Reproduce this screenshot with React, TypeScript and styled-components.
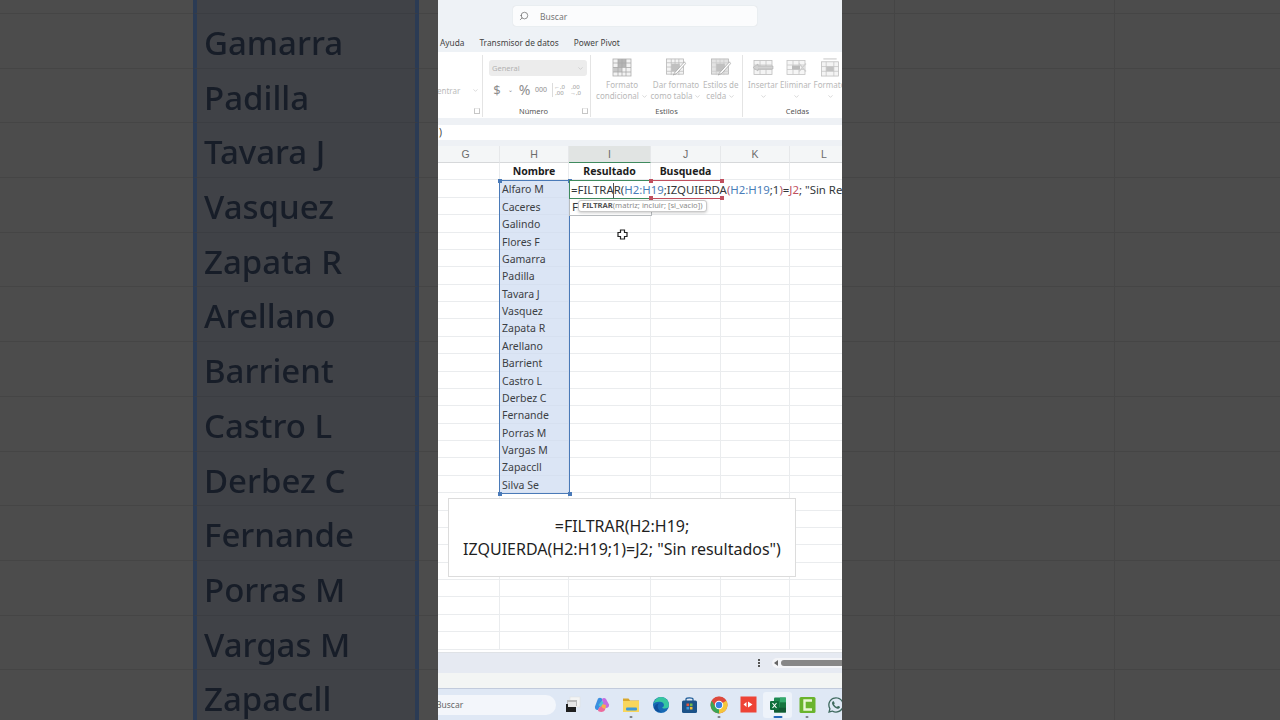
import React from 'react';
import styled, { createGlobalStyle } from 'styled-components';
import { Search, ChevronDown } from 'lucide-react';
import { FaWhatsapp } from 'react-icons/fa';

const FONT = `"Noto Sans", "Liberation Sans", sans-serif`;
const NAMES = [
	'Alfaro M', 'Caceres', 'Galindo', 'Flores F', 'Gamarra', 'Padilla', 'Tavara J', 'Vasquez', 'Zapata R',
	'Arellano', 'Barrient', 'Castro L', 'Derbez C', 'Fernande', 'Porras M', 'Vargas M', 'Zapaccll', 'Silva Se',
];
const COLUMNS = ['G', 'H', 'I', 'J', 'K', 'L'];
const HEADERS: Record<string, string> = { H: 'Nombre', I: 'Resultado', J: 'Busqueda' };
const SHEET_ROWS = 28;

const Global = createGlobalStyle`
	html, body {
		margin: 0;
		width: 1280px;
		height: 720px;
		overflow: hidden;
		background: #4c4c4c;
		font-family: ${FONT};
	}
	* { box-sizing: border-box; }
`;

const Page = styled.div`
	display: flex;
	width: 1280px;
	height: 720px;
	overflow: hidden;
`;

/* dimmed, enlarged copy of the sheet on both sides of the video */
const Backdrop = styled.div`
	flex: 0 0 438px;
	height: 720px;
	overflow: hidden;
	background: #4c4c4c;
	filter: blur(0.7px);
`;

const BackdropGrid = styled.div<{ $columns: string }>`
	display: grid;
	grid-template-columns: ${p => p.$columns};
	grid-auto-rows: 54.7px;
	margin-top: -40.7px;
`;

const BackdropCell = styled.div`
	border-bottom: 1.5px solid #454545;
`;

const BackdropLined = styled(BackdropCell)`
	border-right: 1.5px solid #454545;
`;

const BackdropName = styled(BackdropCell)`
	background: #404247;
	border-left: 4px solid #2b3b54;
	border-right: 4px solid #2b3b54;
	border-bottom-color: #3b3d42;
	padding-left: 7px;
	color: #171d28;
	font-size: 33px;
	font-weight: 500;
	line-height: 57px;
	white-space: nowrap;
`;

const Video = styled.div`
	flex: 0 0 404px;
	height: 720px;
	display: flex;
	flex-direction: column;
	overflow: hidden;
	background: #eef2f6;
`;

const TitleBar = styled.div`
	height: 33px;
	flex: none;
	padding: 6px 0 0 75px;
`;

const SearchBox = styled.div`
	width: 244px;
	height: 20px;
	background: #fbfcfd;
	border-radius: 3px;
	box-shadow: 0 0 1px #c4c8cc;
	display: flex;
	align-items: center;
	gap: 11px;
	padding-left: 6px;
	font-size: 8.5px;
	color: #777;
	svg { transform: scaleX(-1); color: #555; }
`;

const Tabs = styled.div`
	height: 19px;
	flex: none;
	display: flex;
	align-items: center;
	gap: 15px;
	padding: 0 0 1px 2px;
	font-size: 8.3px;
	color: #444;
`;

const Ribbon = styled.div`
	height: 66px;
	flex: none;
	background: #fff;
	display: flex;
	box-shadow: 0 1px 1px #cfd2d5;
`;

const RibbonGroup = styled.div<{ $width: number; $last?: boolean }>`
	flex: 0 0 ${p => p.$width}px;
	min-width: 0;
	margin: 3px 0 1px;
	border-right: ${p => (p.$last ? 'none' : '1px solid #e4e4e4')};
	display: flex;
	flex-direction: column;
`;

const GroupBody = styled.div`
	flex: 1;
	display: flex;
	min-height: 0;
`;

const GroupFooter = styled.div<{ $inset?: number }>`
	height: 12px;
	display: grid;
	grid-template-columns: 1fr auto 1fr;
	align-items: center;
	font-size: 7.5px;
	color: #555;
	padding-right: ${p => p.$inset ?? 0}px;
`;

const GroupTitle = styled.span`
	grid-column: 2;
`;

const Launcher = styled.span<{ $pull?: number }>`
	grid-column: 3;
	justify-self: end;
	width: 6px;
	height: 6px;
	margin-right: ${p => 2 - (p.$pull ?? 0)}px;
	border: 1px solid #c6c6c6;
	border-top-color: #e8e8e8;
`;

const CenterSlot = styled.div`
	display: flex;
	align-items: center;
	gap: 12px;
	padding-top: 26px;
	margin-left: -1px;
	height: 44px;
	font-size: 8px;
	color: #bbb;
`;

const NumberBody = styled.div`
	display: flex;
	flex-direction: column;
	padding: 5px 4px 0 6px;
	width: 100%;
`;

const FormatSelect = styled.div`
	height: 16px;
	width: 98px;
	background: #ececec;
	border-radius: 3px;
	font-size: 7.5px;
	color: #b2b2b2;
	display: flex;
	align-items: center;
	justify-content: space-between;
	padding: 0 3px;
`;

const NumberSymbols = styled.div`
	display: flex;
	align-items: center;
	height: 25px;
	margin-top: 1px;
	padding-left: 2px;
	color: #8e8e8e;
`;

const NumberSymbol = styled.span<{ $size: number; $width: number }>`
	font-size: ${p => p.$size}px;
	width: ${p => p.$width}px;
	text-align: center;
	flex: none;
`;

const SymbolDivider = styled.span`
	width: 1px;
	height: 14px;
	background: #dcdcdc;
	margin-left: 1px;
`;

const StackedDigits = styled.span<{ $width: number }>`
	width: ${p => p.$width}px;
	flex: none;
	font-size: 6px;
	line-height: 6px;
	text-align: center;
	color: #9a9a9a;
`;

const RibbonButton = styled.div<{ $width: number }>`
	flex: 0 0 ${p => p.$width}px;
	display: flex;
	flex-direction: column;
	align-items: center;
	padding-top: 3px;
	svg { flex: none; }
`;

const ButtonLabel = styled.div`
	margin-top: 2px;
	font-size: 8px;
	line-height: 11px;
	color: #b8b8b8;
	text-align: center;
	white-space: nowrap;
	svg { display: inline; margin-left: 2px; vertical-align: middle; }
`;

const ButtonRow = styled(GroupBody)`
	padding-left: 4px;
`;

const Strip = styled.div<{ $height: number }>`
	height: ${p => p.$height}px;
	flex: none;
	background: #eef1f5;
`;

const FormulaBar = styled.div`
	height: 15px;
	flex: none;
	background: #fff;
	padding-left: 1px;
	font-size: 10px;
	line-height: 14px;
	color: #444;
`;

const Sheet = styled.div`
	position: relative;
	height: 506px;
	flex: none;
	background: #fff;
	overflow: hidden;
	display: grid;
	grid-template-columns: 62px 69px 82px 70px 69px 69px;
	grid-template-rows: 17px repeat(${SHEET_ROWS}, 17.39px);
`;

const ColumnHead = styled.div<{ $active?: boolean; $shift?: boolean }>`
	background: ${p => (p.$active ? '#e1e4e3' : '#f4f6f7')};
	border-bottom: ${p => (p.$active ? '1.5px solid #3f8a5e' : '1px solid #d6d8da')};
	border-right: 1px solid #e6e8ea;
	font-family: "Liberation Sans", sans-serif;
	font-size: 10.5px;
	line-height: 16px;
	text-align: center;
	color: #6c6c6c;
	padding-right: ${p => (p.$shift ? '6px' : '0')};
`;

const Cell = styled.div<{ $selected?: boolean; $header?: boolean }>`
	background: ${p => (p.$selected ? '#dbe5f5' : '#fff')};
	border-right: 1px solid ${p => (p.$selected ? '#d6e0f0' : '#eaecee')};
	border-bottom: 1px solid ${p => (p.$selected ? '#d6e0f0' : '#eaecee')};
	font-size: 10.5px;
	line-height: 16px;
	font-weight: ${p => (p.$header ? 700 : 400)};
	text-align: ${p => (p.$header ? 'center' : 'left')};
	padding: ${p => (p.$header ? '0' : '1px 0 0 2px')};
	color: ${p => (p.$header ? '#1d1d1d' : '#3c3f44')};
	white-space: nowrap;
	overflow: hidden;
`;

const RangeBox = styled.div`
	position: absolute;
	left: 61px;
	top: 34px;
	width: 71px;
	height: 314px;
	border: 1.5px solid #4a7ab8;
`;

const Handle = styled.span<{ $color: string; $x: 'left' | 'right'; $y: 'top' | 'bottom' }>`
	position: absolute;
	width: 4px;
	height: 4px;
	background: ${p => p.$color};
	${p => p.$x}: -2.5px;
	${p => p.$y}: -2.5px;
`;

const FormulaEditor = styled.div`
	position: absolute;
	left: 131px;
	top: 35px;
	width: 273px;
	height: 17px;
	background: #fff;
	padding-left: 2px;
	font-size: 11.4px;
	line-height: 17px;
	color: #33373a;
	white-space: pre;
	overflow: hidden;
`;

const Ref = styled.span<{ $color: string }>`
	color: ${p => p.$color};
`;

const ActiveCell = styled.div`
	position: absolute;
	left: 131px;
	top: 34px;
	width: 83px;
	height: 18.5px;
	border: 1.5px solid #3f8a5e;
	border-right: none;
`;

const SearchRange = styled.div`
	position: absolute;
	left: 213px;
	top: 34px;
	width: 70px;
	height: 18.5px;
	border-top: 1.5px solid #c0505f;
	border-bottom: 1.5px solid #c0505f;
`;

const TextCaret = styled.div`
	position: absolute;
	left: 175px;
	top: 37px;
	width: 1px;
	height: 15px;
	background: #555;
`;

const SpillCell = styled.div`
	position: absolute;
	left: 131px;
	top: 52px;
	width: 83px;
	height: 17.5px;
	background: #fff;
	border: 1px solid #b8bcbf;
	border-top: none;
	padding-left: 2px;
	font-size: 11.5px;
	line-height: 17px;
	color: #33373a;
`;

const ArgTip = styled.div`
	position: absolute;
	left: 140px;
	top: 54px;
	width: 129px;
	height: 11.5px;
	background: #fff;
	border: 1px solid #c9c9c9;
	border-radius: 3px;
	box-shadow: 0 1px 3px rgba(0, 0, 0, 0.2);
	padding-left: 3px;
	font-size: 7.6px;
	line-height: 9.5px;
	color: #8a8a8a;
	white-space: nowrap;
	b { color: #555; }
`;

const CellCursor = styled.svg`
	position: absolute;
	left: 179px;
	top: 83px;
`;

const Caption = styled.div`
	position: absolute;
	left: 10px;
	top: 352px;
	width: 348px;
	height: 79px;
	background: #fff;
	border: 1px solid #dcdcdc;
	display: flex;
	align-items: center;
	justify-content: center;
	text-align: center;
	font-size: 16px;
	line-height: 23px;
	color: #1f1f1f;
`;

const SheetTabs = styled.div`
	height: 21px;
	flex: none;
	background: #e6eaf2;
	display: flex;
	align-items: center;
	justify-content: flex-end;
	border-top: 1px solid #dfe2e6;
`;

const Dots = styled.span`
	width: 2px;
	height: 2px;
	background: #555;
	box-shadow: 0 3px 0 #555, 0 -3px 0 #555;
	margin-right: 12px;
`;

const ScrollTrack = styled.div`
	width: 70px;
	height: 10px;
	background: #f4f5f8;
	border-radius: 5px 0 0 5px;
	display: flex;
	align-items: center;
	padding-left: 2px;
	gap: 3px;
`;

const ScrollArrow = styled.span`
	width: 0;
	height: 0;
	border-top: 3px solid transparent;
	border-bottom: 3px solid transparent;
	border-right: 4px solid #666;
`;

const ScrollThumb = styled.span`
	flex: 1;
	height: 6px;
	background: #878787;
	border-radius: 3px 0 0 3px;
`;

const StatusBar = styled.div`
	height: 15px;
	flex: none;
	background: #f3f5f4;
`;

const Taskbar = styled.div`
	flex: 1;
	background: #dfe8f5;
	border-top: 1px solid #c2cbdc;
	display: flex;
	align-items: center;
`;

const TaskSearch = styled.div`
	flex: 0 0 118px;
	height: 20px;
	background: #f3f6fb;
	border-radius: 0 10px 10px 0;
	font-size: 8.5px;
	line-height: 20px;
	color: #666;
	margin-right: 2px;
	text-indent: -2px;
`;

const TaskIcon = styled.div<{ $active?: boolean; $mark?: 'open' | 'focus' }>`
	position: relative;
	flex: 0 0 29.3px;
	height: 26px;
	display: flex;
	align-items: center;
	justify-content: center;
	border-radius: 3px;
	background: ${p => (p.$active ? '#eef3fa' : 'transparent')};
	&::after {
		content: '';
		display: ${p => (p.$mark ? 'block' : 'none')};
		position: absolute;
		bottom: 0;
		left: 50%;
		transform: translateX(-50%);
		width: ${p => (p.$mark === 'focus' ? '9px' : '3px')};
		height: 1.5px;
		border-radius: 1px;
		background: ${p => (p.$mark === 'focus' ? '#2568b8' : '#7c8288')};
	}
`;

const GridLines = ({ stroke }: { stroke: string }) => (
	<path d="M1 5H19M1 9.5H19M1 14H19M6 1V18M10 1V18M14 1V18" stroke={stroke} strokeWidth="0.8" fill="none" />
);

const ConditionalGlyph = () => (
	<svg width="20" height="19" viewBox="0 0 20 19">
		<rect x="1" y="1" width="18" height="17" fill="#f2f2f2" stroke="#aeaeae" strokeWidth="0.8" />
		<rect x="6" y="1" width="8" height="8" fill="#b5b5b5" />
		<rect x="1" y="9" width="9" height="5" fill="#c8c8c8" />
		<GridLines stroke="#a9a9a9" />
	</svg>
);

const BrushGlyph = ({ boxed }: { boxed?: boolean }) => (
	<svg width="22" height="19" viewBox="0 0 22 20">
		<rect x="1" y="1" width="18" height="16" fill={boxed ? '#e3e3e3' : '#f4f4f4'} stroke="#b4b4b4" strokeWidth="0.8" />
		<GridLines stroke={boxed ? '#cccccc' : '#bcbcbc'} />
		<rect x="6" y="6" width="9" height="8" fill="#c0c0c0" />
		<path d="M20 4L10 15L8 18L12 16L21 6Z" fill="#fff" stroke="#a4a4a4" strokeWidth="0.8" />
	</svg>
);

const InsertGlyph = () => (
	<svg width="22" height="19" viewBox="0 0 22 18">
		<rect x="2" y="2" width="18" height="14" fill="#f4f4f4" stroke="#bdbdbd" strokeWidth="0.8" />
		<path d="M2 6.5H20M2 11H20M8 2V16M14 2V16" stroke="#c4c4c4" strokeWidth="0.8" />
		<path d="M1 9L6 5.5V7.5H21V10.5H6V12.5Z" fill="#d2d2d2" stroke="#b0b0b0" strokeWidth="0.6" />
	</svg>
);

const DeleteGlyph = () => (
	<svg width="22" height="19" viewBox="0 0 22 18">
		<rect x="2" y="2" width="18" height="14" fill="#f6f6f6" stroke="#c4c4c4" strokeWidth="0.8" />
		<path d="M2 6.5H20M2 11H20M8 2V16M14 2V16" stroke="#c8c8c8" strokeWidth="0.8" />
		<rect x="7" y="7" width="8" height="4" fill="#bbbbbb" />
		<path d="M14 5L21 13M21 5L14 13" stroke="#cfcfcf" strokeWidth="1.2" />
	</svg>
);

const SizeGlyph = () => (
	<svg width="20" height="19" viewBox="0 0 20 20">
		<path d="M3 1H17" stroke="#b4b4b4" strokeWidth="0.8" />
		<rect x="1" y="4" width="18" height="15" fill="#f4f4f4" stroke="#bdbdbd" strokeWidth="0.8" />
		<path d="M1 9H19M1 14H19M6 4V19M14 4V19" stroke="#c4c4c4" strokeWidth="0.8" />
		<rect x="6" y="9" width="8" height="5" fill="#c2c2c2" />
	</svg>
);

const Chevron = () => <ChevronDown size={7} color="#bdbdbd" strokeWidth={2} />;

const WindowsSwitcherIcon = () => (
	<svg width="17" height="17" viewBox="0 0 17 17">
		<rect x="6" y="1" width="10" height="10" fill="#f3f4f4" stroke="#dedede" strokeWidth="0.5" />
		<rect x="3" y="4" width="10" height="6" fill="#b9b9b9" />
		<rect x="2" y="8" width="10" height="8" fill="#1f1f1f" />
		<rect x="4" y="6" width="8" height="5" fill="#e6e6e6" />
	</svg>
);

const CopilotIcon = () => (
	<svg width="18" height="18" viewBox="0 0 18 18">
		<path d="M5 2.5C7 1 9 2 9.5 4L8 9L5 14C3 14.5 1.5 12.5 2 10.5Z" fill="#3b8fe0" />
		<path d="M6 15.5C4.5 15 5 13.5 6 12L9 8L13 9L12 14C11 16 8 16.5 6 15.5Z" fill="#ec6a9c" />
		<path d="M9 3C10 1.5 12 1.5 13 3L16 8.5C16.5 10.5 15 12 13 12L10 10Z" fill="#c36ee0" />
		<path d="M9 8L13 9L12.5 12.5C11 13 9 12 8.5 10.5Z" fill="#f4b24a" />
		<path d="M5.5 9L9 4.5L10.5 7L7.5 11Z" fill="#4cc6d0" />
	</svg>
);

const FolderIcon = () => (
	<svg width="18" height="18" viewBox="0 0 18 18">
		<path d="M1 2.5H6.5L8 4.5H17V16H1Z" fill="#d9a72c" />
		<rect x="1" y="5" width="16" height="11" fill="#f9d65c" />
		<rect x="4" y="11.5" width="11" height="3" rx="1" fill="#3f9ad6" />
	</svg>
);

const EdgeIcon = () => (
	<svg width="18" height="18" viewBox="0 0 18 18">
		<circle cx="9" cy="9" r="8" fill="#1668b4" />
		<path d="M1.5 8C2.5 3.5 6 1 9 1C13.5 1 17 4.5 17 9.5C17 11.5 15 12.5 13 12.5C11 12.5 10 12 10 11.5C13 11 12.5 6.5 9 6C5.5 5.5 2.5 6.5 1.5 8Z" fill="#37c6a0" />
		<path d="M7 7.5C5 9 5 13.5 9 15.5C6 16.5 3 15 2 11.5C3 9 5 7.5 7 7.5Z" fill="#0f4f9a" />
	</svg>
);

const StoreIcon = () => (
	<svg width="17" height="18" viewBox="0 0 17 18">
		<path d="M5 5V3C5 1.5 12 1.5 12 3V5" fill="none" stroke="#1c5a96" strokeWidth="1.2" />
		<rect x="1" y="4.5" width="15" height="12.5" rx="1.5" fill="#1c5288" />
		<rect x="5.5" y="7.5" width="2.6" height="2.6" fill="#e5553d" />
		<rect x="8.9" y="7.5" width="2.6" height="2.6" fill="#74b94a" />
		<rect x="5.5" y="10.9" width="2.6" height="2.6" fill="#3b9be0" />
		<rect x="8.9" y="10.9" width="2.6" height="2.6" fill="#f5bc30" />
	</svg>
);

const ChromeIcon = () => (
	<svg width="18" height="18" viewBox="0 0 18 18">
		<circle cx="9" cy="9" r="8.5" fill="#dd4a3e" />
		<path d="M9 9L1.7 4.8A8.5 8.5 0 0 0 9 17.5Z" fill="#3aa655" />
		<path d="M9 9L9 17.5A8.5 8.5 0 0 0 16.4 4.8Z" fill="#f5c63a" />
		<path d="M9 5H16.4A8.5 8.5 0 0 0 1.7 4.8L5 10Z" fill="#dd4a3e" />
		<circle cx="9" cy="9" r="4.2" fill="#fff" />
		<circle cx="9" cy="9" r="3.2" fill="#3a7fe0" />
	</svg>
);

const RedAppIcon = () => (
	<svg width="17" height="17" viewBox="0 0 17 17">
		<rect width="16" height="16" y="0.5" x="0.5" fill="#ee4336" />
		<path d="M3.5 8.5L6.5 6V11ZM8 5.5L12.5 8.5L8 11.5Z" fill="#fff" />
	</svg>
);

const ExcelIcon = () => (
	<svg width="18" height="18" viewBox="0 0 18 18">
		<rect x="5" y="1.5" width="12" height="15" rx="1" fill="#1f8a52" />
		<rect x="11" y="1.5" width="6" height="5" fill="#35ab6e" />
		<rect x="11" y="6.5" width="6" height="5" fill="#17753f" />
		<rect x="5" y="11.5" width="12" height="5" fill="#125a33" />
		<rect x="1" y="5" width="9" height="9" rx="1" fill="#0f6e3b" />
		<path d="M3.5 7L7.5 12M7.5 7L3.5 12" stroke="#fff" strokeWidth="1.1" />
	</svg>
);

const CamtasiaIcon = () => (
	<svg width="17" height="18" viewBox="0 0 17 18">
		<rect x="0.5" y="1" width="16" height="16" rx="1.5" fill="#6ab42d" />
		<path d="M13 4.5H5.5V13.5H13" fill="none" stroke="#e9f6d5" strokeWidth="2.4" />
	</svg>
);

export default function App() {
	return (
		<Page>
			<Global />
			<Backdrop>
				<BackdropGrid $columns="193px 226px 19px">
					{NAMES.slice(3, 17).map(name => (
						<React.Fragment key={name}>
							<BackdropCell />
							<BackdropName>{name}</BackdropName>
							<BackdropCell />
						</React.Fragment>
					))}
				</BackdropGrid>
			</Backdrop>

			<Video>
				<TitleBar>
					<SearchBox>
						<Search size={10} strokeWidth={1.5} />
						Buscar
					</SearchBox>
				</TitleBar>
				<Tabs>
					<span>Ayuda</span>
					<span>Transmisor de datos</span>
					<span>Power Pivot</span>
				</Tabs>
				<Ribbon>
					<RibbonGroup $width={45}>
						<GroupBody>
							<CenterSlot>
								<span>entrar</span>
								<ChevronDown size={7} color="#c4c4c4" />
							</CenterSlot>
						</GroupBody>
						<GroupFooter><Launcher /></GroupFooter>
					</RibbonGroup>
					<RibbonGroup $width={108}>
						<GroupBody>
							<NumberBody>
								<FormatSelect>
									General
									<ChevronDown size={7} color="#bbb" />
								</FormatSelect>
								<NumberSymbols>
									<NumberSymbol $size={13} $width={12}>$</NumberSymbol>
									<NumberSymbol $size={6} $width={15}>⌄</NumberSymbol>
									<NumberSymbol $size={14} $width={13}>%</NumberSymbol>
									<NumberSymbol $size={7} $width={20}>000</NumberSymbol>
									<SymbolDivider />
									<StackedDigits $width={13}>←,0<br />,00</StackedDigits>
									<StackedDigits $width={19}>,00<br />→,0</StackedDigits>
								</NumberSymbols>
							</NumberBody>
						</GroupBody>
						<GroupFooter $inset={6}>
							<GroupTitle>Número</GroupTitle>
							<Launcher $pull={6} />
						</GroupFooter>
					</RibbonGroup>
					<RibbonGroup $width={152}>
						<ButtonRow>
							<RibbonButton $width={54}>
								<ConditionalGlyph />
								<ButtonLabel>Formato<br />condicional<Chevron /></ButtonLabel>
							</RibbonButton>
							<RibbonButton $width={54}>
								<BrushGlyph />
								<ButtonLabel>Dar formato<br />como tabla<Chevron /></ButtonLabel>
							</RibbonButton>
							<RibbonButton $width={34}>
								<BrushGlyph boxed />
								<ButtonLabel>Estilos de<br />celda<Chevron /></ButtonLabel>
							</RibbonButton>
						</ButtonRow>
						<GroupFooter><GroupTitle>Estilos</GroupTitle></GroupFooter>
					</RibbonGroup>
					<RibbonGroup $width={109} $last>
						<ButtonRow>
							<RibbonButton $width={32}>
								<InsertGlyph />
								<ButtonLabel>Insertar<br /><Chevron /></ButtonLabel>
							</RibbonButton>
							<RibbonButton $width={33}>
								<DeleteGlyph />
								<ButtonLabel>Eliminar<br /><Chevron /></ButtonLabel>
							</RibbonButton>
							<RibbonButton $width={35}>
								<SizeGlyph />
								<ButtonLabel>Formato<br /><Chevron /></ButtonLabel>
							</RibbonButton>
						</ButtonRow>
						<GroupFooter><GroupTitle>Celdas</GroupTitle></GroupFooter>
					</RibbonGroup>
				</Ribbon>
				<Strip $height={7} />
				<FormulaBar>)</FormulaBar>
				<Strip $height={6} />

				<Sheet>
					{COLUMNS.map(col => (
						<ColumnHead key={col} $active={col === 'I'} $shift={col === 'G'}>{col}</ColumnHead>
					))}
					{Array.from({ length: SHEET_ROWS }).map((_, row) =>
						COLUMNS.map(col => {
							const isName = col === 'H' && row >= 1 && row <= NAMES.length;
							return (
								<Cell key={col + row} $header={row === 0} $selected={isName}>
									{row === 0 ? HEADERS[col] : isName ? NAMES[row - 1] : ''}
								</Cell>
							);
						})
					)}

					<RangeBox>
						<Handle $color="#4a7ab8" $x="left" $y="top" />
						<Handle $color="#4a7ab8" $x="right" $y="top" />
						<Handle $color="#4a7ab8" $x="left" $y="bottom" />
						<Handle $color="#4a7ab8" $x="right" $y="bottom" />
					</RangeBox>
					<SpillCell>F</SpillCell>
					<FormulaEditor>
						=FILTRAR(<Ref $color="#4a7db8">H2:H19</Ref>;IZQUIERDA<Ref $color="#b4566a">(</Ref>
						<Ref $color="#4a7db8">H2:H19</Ref>;1<Ref $color="#b4566a">)</Ref>=<Ref $color="#c0505f">J2</Ref>; "Sin Resultados")
					</FormulaEditor>
					<ActiveCell />
					<SearchRange>
						<Handle $color="#c0505f" $x="left" $y="top" />
						<Handle $color="#c0505f" $x="right" $y="top" />
						<Handle $color="#c0505f" $x="left" $y="bottom" />
						<Handle $color="#c0505f" $x="right" $y="bottom" />
					</SearchRange>
					<TextCaret />
					<ArgTip><b>FILTRAR</b>(matriz; incluir; [si_vacio])</ArgTip>
					<CellCursor width="11" height="11" viewBox="0 0 11 11">
						<path d="M3.5 1H7.5V3.5H10V7.5H7.5V10H3.5V7.5H1V3.5H3.5Z" fill="#fff" stroke="#222" strokeWidth="1.2" />
					</CellCursor>
					<Caption>
						<div>
							=FILTRAR(H2:H19;<br />
							IZQUIERDA(H2:H19;1)=J2; "Sin resultados")
						</div>
					</Caption>
				</Sheet>

				<SheetTabs>
					<Dots />
					<ScrollTrack>
						<ScrollArrow />
						<ScrollThumb />
					</ScrollTrack>
				</SheetTabs>
				<StatusBar />
				<Taskbar>
					<TaskSearch>Buscar</TaskSearch>
					<TaskIcon><WindowsSwitcherIcon /></TaskIcon>
					<TaskIcon><CopilotIcon /></TaskIcon>
					<TaskIcon $mark="open"><FolderIcon /></TaskIcon>
					<TaskIcon><EdgeIcon /></TaskIcon>
					<TaskIcon><StoreIcon /></TaskIcon>
					<TaskIcon $mark="open"><ChromeIcon /></TaskIcon>
					<TaskIcon><RedAppIcon /></TaskIcon>
					<TaskIcon $active $mark="focus"><ExcelIcon /></TaskIcon>
					<TaskIcon $mark="open"><CamtasiaIcon /></TaskIcon>
					<TaskIcon><FaWhatsapp size={18} color="#3f6a5f" /></TaskIcon>
				</Taskbar>
			</Video>

			<Backdrop>
				<BackdropGrid $columns="53px 220px 165px">
					{Array.from({ length: 14 }).map((_, i) => (
						<React.Fragment key={i}>
							<BackdropLined />
							<BackdropLined />
							<BackdropCell />
						</React.Fragment>
					))}
				</BackdropGrid>
			</Backdrop>
		</Page>
	);
}
